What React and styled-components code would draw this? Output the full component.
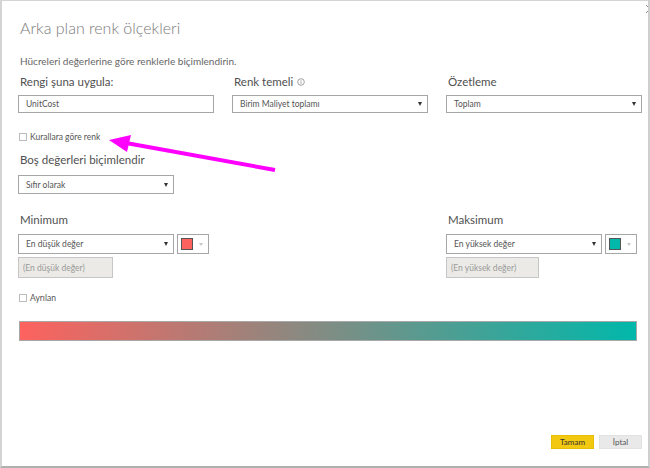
import React from 'react';
import styled, { createGlobalStyle } from 'styled-components';

const GlobalStyle = createGlobalStyle`
  html, body {
    margin: 0;
    padding: 0;
    background: #ffffff;
  }
  body {
    font-family: 'Segoe UI', Lato, 'Open Sans', sans-serif;
    color: #333;
  }
`;

const Dialog = styled.div`
  position: relative;
  width: 650px;
  height: 468px;
  box-sizing: border-box;
  border-top: 1px solid #d4d4d4;
  border-left: 2px solid #d4d4d4;
  border-right: 2px solid #cfcfcf;
  border-bottom: 2px solid #b0b0b0;
  padding: 15px 6px 17px 16px;
  display: flex;
  flex-direction: column;
  overflow: hidden;
`;

const Close = styled.svg`
  position: absolute;
  top: 3px;
  right: -7px;
`;

const Title = styled.h1`
  margin: 0;
  font-size: 16px;
  line-height: 24px;
  font-weight: 300;
  color: #7a7a7a;
  padding-left: 2px;
`;

const Subtitle = styled.p`
  margin: 14px 0 0;
  font-size: 10px;
  line-height: 14px;
  color: #666;
  padding-left: 2px;
`;

const Grid = styled.div`
  display: grid;
  grid-template-columns: 196px 196px 196px;
  column-gap: 18px;
  margin-top: ${p => p.$top || 0}px;
`;

const Cell = styled.div`
  grid-column: ${p => p.$col || 'auto'};
  display: flex;
  flex-direction: column;
`;

const Label = styled.div`
  font-size: 11.5px;
  line-height: 16px;
  color: #505050;
  padding-left: 2px;
  display: flex;
  align-items: center;
  gap: 4px;
`;

const Field = styled.div`
  box-sizing: border-box;
  height: ${p => p.$h || 18}px;
  width: ${p => (p.$w ? `${p.$w}px` : '100%')};
  border: 1px solid ${p => (p.$disabled ? '#c6c6c6' : '#a6a6a6')};
  background: ${p => (p.$disabled ? '#ebeae6' : '#fff')};
  display: flex;
  align-items: center;
  justify-content: space-between;
  padding: 0 5px 0 ${p => (p.$disabled ? 4 : 7)}px;
  font-size: 8.5px;
  color: ${p => (p.$disabled ? '#9a9a9a' : '#555')};
  margin-top: ${p => p.$top || 0}px;
`;

const Caret = styled.span`
  width: 0;
  height: 0;
  border-left: 2.5px solid transparent;
  border-right: 2.5px solid transparent;
  border-top: 4px solid #333;
`;

const PickerRow = styled.div`
  display: flex;
  gap: 3px;
  margin-top: 6px;
`;

const Picker = styled.div`
  box-sizing: border-box;
  width: 32px;
  height: 20px;
  border: 1px solid #a6a6a6;
  display: flex;
  align-items: center;
  padding-left: 3px;
  gap: 6px;
`;

const Swatch = styled.span`
  box-sizing: border-box;
  width: 12px;
  height: 12px;
  border: 1px solid #555;
  background: ${p => p.$color};
`;

const PickerCaret = styled.span`
  width: 0;
  height: 0;
  border-left: 2.5px solid transparent;
  border-right: 2.5px solid transparent;
  border-top: 3px solid #c8c8c8;
`;

const Check = styled.label`
  display: flex;
  align-items: center;
  gap: 3px;
  height: 12px;
  font-size: 8.5px;
  color: #555;
  padding-left: 1px;
  margin-top: ${p => p.$top || 0}px;
`;

const Box = styled.span`
  box-sizing: border-box;
  width: 8px;
  height: 8px;
  border: 1px solid #bcbcbc;
  background: #fff;
`;

const Section = styled(Label)`
  margin-top: ${p => p.$top || 0}px;
`;

const Gradient = styled.div`
  box-sizing: border-box;
  margin-top: 17px;
  margin-left: 1px;
  width: 618px;
  height: 20px;
  border: 1px solid #a8a8a8;
  background: linear-gradient(to right, #fd625e, #01b8aa);
`;

const Footer = styled.div`
  margin-top: auto;
  display: flex;
  justify-content: flex-end;
  gap: 5px;
`;

const Button = styled.button`
  box-sizing: border-box;
  width: 43px;
  height: 14px;
  padding: 0;
  border: 1px solid ${p => (p.$primary ? '#e8bd08' : '#e2e2e2')};
  background: ${p => (p.$primary ? '#f2c811' : '#e9e9e9')};
  color: ${p => (p.$primary ? '#333' : '#555')};
  font-family: inherit;
  font-size: 8px;
  line-height: 12px;
`;

const Arrow = styled.svg`
  position: absolute;
  left: 0;
  top: 0;
  pointer-events: none;
`;

const InfoIcon = () => (
  <svg width="8" height="8" viewBox="0 0 8 8">
    <circle cx="4" cy="4" r="3.3" fill="none" stroke="#8a8a8a" strokeWidth="0.8" />
    <rect x="3.6" y="3.4" width="0.8" height="2.4" fill="#8a8a8a" />
    <rect x="3.6" y="2.1" width="0.8" height="0.8" fill="#8a8a8a" />
  </svg>
);

const Select = ({ children, h, w, top }) => (
  <Field $h={h} $w={w} $top={top}>
    <span>{children}</span>
    <Caret />
  </Field>
);

export default function App() {
  return (
    <>
      <GlobalStyle />
      <Dialog>
        <Close width="10" height="10" viewBox="0 0 10 10">
          <path d="M1 1 L9 9 M9 1 L1 9" stroke="#888" strokeWidth="1" />
        </Close>

        <Title>Arka plan renk ölçekleri</Title>
        <Subtitle>Hücreleri değerlerine göre renklerle biçimlendirin.</Subtitle>

        <Grid $top={6}>
          <Cell>
            <Label>Rengi şuna uygula:</Label>
            <Field $top={5}>UnitCost</Field>
          </Cell>
          <Cell>
            <Label>Renk temeli <InfoIcon /></Label>
            <Select top={5}>Birim Maliyet toplamı</Select>
          </Cell>
          <Cell>
            <Label>Özetleme</Label>
            <Select top={5}>Toplam</Select>
          </Cell>
        </Grid>

        <Check $top={18}><Box />Kurallara göre renk</Check>

        <Section $top={9}>Boş değerleri biçimlendir</Section>
        <Select h={19} w={156} top={7}>Sıfır olarak</Select>

        <Grid $top={18}>
          <Cell $col={1}>
            <Label>Minimum</Label>
            <PickerRow>
              <Select h={20} w={156}>En düşük değer</Select>
              <Picker><Swatch $color="#fd625e" /><PickerCaret /></Picker>
            </PickerRow>
            <Field $disabled $h={21} $w={95} $top={3}>(En düşük değer)</Field>
          </Cell>
          <Cell $col={3}>
            <Label>Maksimum</Label>
            <PickerRow>
              <Select h={20} w={156}>En yüksek değer</Select>
              <Picker><Swatch $color="#01b8aa" /><PickerCaret /></Picker>
            </PickerRow>
            <Field $disabled $h={21} $w={93} $top={3}>(En yüksek değer)</Field>
          </Cell>
        </Grid>

        <Check $top={14}><Box />Ayrılan</Check>

        <Gradient />

        <Footer>
          <Button $primary>Tamam</Button>
          <Button>İptal</Button>
        </Footer>

        <Arrow width="650" height="468" viewBox="0 0 650 468">
          <line x1="273" y1="169" x2="124" y2="142" stroke="#ff00ff" strokeWidth="4" />
          <polygon points="107,139 129,134 125,151" fill="#ff00ff" />
        </Arrow>
      </Dialog>
    </>
  );
}
